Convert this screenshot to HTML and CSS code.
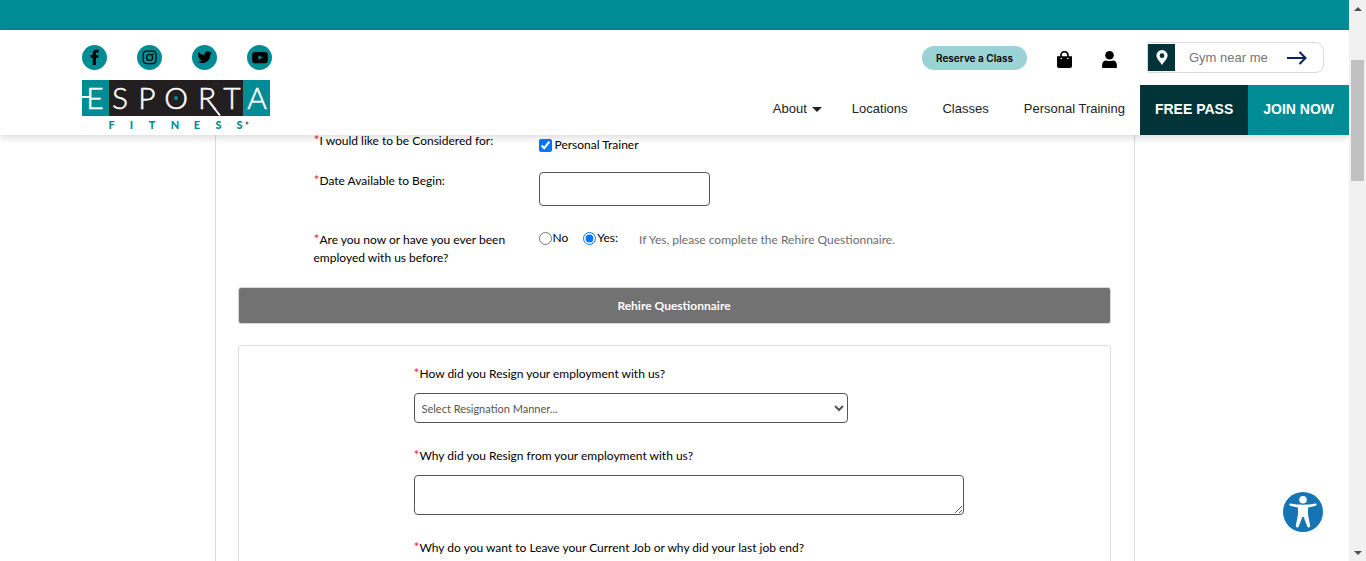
FILE: index.html
```html
<!DOCTYPE html>
<html lang="en">
<head>
<meta charset="utf-8">
<title>Esporta Fitness - Employment Application</title>
<link rel="stylesheet" href="styles.css">
</head>
<body>
<div class="viewport">
  <div class="page">
    <div class="top-strip"></div>
    <header class="site-header">
      <div class="brand">
        <div class="social">
          <a href="#" class="social-link" aria-label="Facebook"><svg width="25" height="25" viewBox="0 0 25 25"><path d="M10.800 20v-7.200H8.600V9.900h2.200V8.300c0-2.400 1.400-3.500 3.600-3.500 1 0 1.900.1 2.300.2v2.600h-1.400c-1.100 0-1.400.5-1.400 1.300v1h2.700l-.4 2.900h-2.300V20z"/></svg></a>
          <a href="#" class="social-link" aria-label="Instagram"><svg width="25" height="25" viewBox="0 0 25 25" fill="none" stroke="#000" stroke-width="1.200"><rect x="6.200" y="6.200" width="12.800" height="12.400" rx="3.500"/><circle cx="12.600" cy="12.400" r="3"/><circle cx="16.200" cy="8.900" r=".3"/></svg></a>
          <a href="#" class="social-link" aria-label="Twitter"><svg width="25" height="25" viewBox="0 0 25 25"><g transform="translate(5.500 5) scale(.6)"><path d="M23.950 4.570a10 10 0 0 1-2.820.78 4.960 4.960 0 0 0 2.160-2.720c-.95.550-2 .960-3.130 1.190a4.920 4.920 0 0 0-8.380 4.480C7.690 8.090 4.070 6.130 1.640 3.160a4.920 4.920 0 0 0 1.520 6.570 4.900 4.900 0 0 1-2.230-.61v.06c0 2.380 1.700 4.370 3.950 4.820a5 5 0 0 1-2.210.09 4.940 4.940 0 0 0 4.600 3.420A9.870 9.870 0 0 1 0 19.540a14 14 0 0 0 7.550 2.210c9.050 0 14-7.500 14-13.980 0-.21 0-.42-.02-.63a9.940 9.940 0 0 0 2.420-2.570z"/></g></svg></a>
          <a href="#" class="social-link" aria-label="YouTube"><svg width="25" height="25" viewBox="0 0 25 25"><rect x="5.200" y="7" width="15.600" height="11.200" rx="2.600"/><path d="M11.400 10.200v4.800l4.300-2.400z" fill="#008c95"/></svg></a>
        </div>
        <a href="#" class="logo" aria-label="Esporta Fitness">
          <svg width="188" height="50" viewBox="0 0 188 50">
            <rect width="188" height="36" fill="#008c95"/>
            <rect x="27" width="134" height="36" fill="#231f20"/>
            <g class="logo-name" text-anchor="middle">
              <text x="13" y="29">E</text><text x="38" y="29">S</text><text x="65" y="29">P</text><text x="94" y="29">O</text><text x="125" y="29">R</text><text x="150" y="29">T</text><text x="175" y="29">A</text>
            </g>
            <path d="M0 17h8M132 28l6 7.500" stroke="#fff" stroke-width="2" fill="none"/>
            <circle cx="94" cy="18" r="2" fill="#008c95"/>
            <g class="logo-sub" text-anchor="middle">
              <text x="29.500" y="49">F</text><text x="49.500" y="49">I</text><text x="70" y="49">T</text><text x="93" y="49">N</text><text x="115" y="49">E</text><text x="136.500" y="49">S</text><text x="157.500" y="49">S</text>
            </g>
            <circle cx="165" cy="43" r="1.500" fill="#777"/>
          </svg>
        </a>
      </div>
      <div class="header-side">
        <div class="tools">
          <button class="reserve" type="button">Reserve a Class</button>
          <a href="#" class="tool" aria-label="Shop"><svg width="15" height="17" viewBox="0 0 15 17"><path d="M4 6.500V4.200a3.500 3.500 0 0 1 7 0v2.300" fill="none" stroke="#000" stroke-width="1.700"/><path d="M0 5.300h15V15a2 2 0 0 1-2 2H2a2 2 0 0 1-2-2z"/><circle cx="4.200" cy="7.500" r=".8" fill="#fff"/><circle cx="10.800" cy="7.500" r=".8" fill="#fff"/></svg></a>
          <a href="#" class="tool" aria-label="Account"><svg width="15" height="17" viewBox="0 0 15 17"><circle cx="7.500" cy="4.300" r="4.300"/><path d="M0 15.500c0-4 1.500-5.900 4-5.900 1.200.6 5.800.6 7 0 2.500 0 4 1.900 4 5.900 0 1-.5 1.500-1.500 1.500h-12c-1 0-1.500-.5-1.500-1.500z"/></svg></a>
          <form class="search">
            <span class="pin"><svg width="12" height="15" viewBox="0 0 12 15"><path fill="#fff" fill-rule="evenodd" d="M6 0a5.600 5.600 0 0 1 5.600 5.600C11.600 9 7.500 12.500 6 15 4.500 12.500.4 9 .4 5.600A5.600 5.600 0 0 1 6 0zm0 3.300a2.400 2.400 0 1 0 0 4.800 2.400 2.400 0 0 0 0-4.800z"/></svg></span>
            <input class="search-input" type="text" placeholder="Gym near me" aria-label="Gym near me">
            <button class="search-go" type="button" aria-label="Search"><svg width="20" height="14" viewBox="0 0 20 14" fill="none" stroke="#0b1f66" stroke-width="2"><path d="M0 7h18.500M12.500 1l6 6-6 6"/></svg></button>
          </form>
        </div>
        <nav class="nav">
          <a href="#" class="nav-link">About<span class="caret"></span></a>
          <a href="#" class="nav-link">Locations</a>
          <a href="#" class="nav-link">Classes</a>
          <a href="#" class="nav-link">Personal Training</a>
          <a href="#" class="cta cta-dark">FREE PASS</a>
          <a href="#" class="cta">JOIN NOW</a>
        </nav>
      </div>
    </header>
    <main class="panel">
      <div class="row row-first">
        <span class="label"><span class="req">*</span>I would like to be Considered for:</span>
        <label class="check"><input type="checkbox" class="tick" checked> Personal Trainer</label>
      </div>
      <div class="row">
        <label class="label" for="start"><span class="req">*</span>Date Available to Begin:</label>
        <input class="date" id="start" type="text">
      </div>
      <div class="row row-last">
        <span class="label"><span class="req">*</span>Are you now or have you ever been employed with us before?</span>
        <div class="choices">
          <label class="choice"><input type="radio" class="tick" name="before">No</label>
          <label class="choice"><input type="radio" class="tick" name="before" checked>Yes:</label>
          <span class="hint">If Yes, please complete the Rehire Questionnaire.</span>
        </div>
      </div>
      <h2 class="bar">Rehire Questionnaire</h2>
      <section class="box">
        <div class="field">
          <label for="manner"><span class="req">*</span>How did you Resign your employment with us?</label>
          <select class="select" id="manner"><option>Select Resignation Manner...</option></select>
        </div>
        <div class="field">
          <label for="why"><span class="req">*</span>Why did you Resign from your employment with us?</label>
          <textarea class="area" id="why"></textarea>
        </div>
        <div class="field">
          <label for="leave"><span class="req">*</span>Why do you want to Leave your Current Job or why did your last job end?</label>
          <textarea class="area" id="leave"></textarea>
        </div>
      </section>
    </main>
    <button class="access" type="button" aria-label="Accessibility"><svg width="40" height="40" viewBox="0 0 40 40"><circle cx="20" cy="20" r="20" fill="#1474b4"/><circle cx="20" cy="7.800" r="3.800" fill="#fff"/><path fill="#fff" d="M7.500 11.500c4 .8 8 1.200 12.500 1.200s8.500-.4 12.500-1.200c1.300-.1 1.500 1.900.2 2.300-2.700.8-5.300 1.300-7.700 1.600v7.100l2.200 11.300c.2 1.700-2.200 2.400-2.900.7L20.700 25h-1.400l-3.600 9.500c-.7 1.700-3.100 1-2.900-.7L15 22.500v-7.100c-2.400-.3-5-.8-7.700-1.600-1.300-.4-1.100-2.400.2-2.300z"/></svg></button>
  </div>
  <div class="scrollbar" aria-hidden="true">
    <span class="arrow arrow-up"></span>
    <span class="thumb"></span>
    <span class="arrow arrow-down"></span>
  </div>
</div>
</body>
</html>
```
FILE: styles.css
```css
* { box-sizing: border-box; }
body { margin: 0; font: 12px/18px Lato, "Open Sans", sans-serif; color: #000; background: #fff; }
a { color: inherit; text-decoration: none; }
svg { display: block; }
button { border: 0; padding: 0; background: none; cursor: pointer; }
.viewport { display: grid; grid-template-columns: minmax(0, 1fr) 17px; height: 100vh; overflow: hidden; }
.page { overflow: hidden; }
.top-strip { height: 30px; background: #008c95; }

.site-header { position: relative; z-index: 1; display: flex; justify-content: space-between; background: #fff; box-shadow: 0 2px 8px rgba(0, 0, 0, .16); font-family: "Liberation Sans", Arial, sans-serif; }
.brand { padding: 15px 0 5px 82px; }
.social { display: flex; gap: 30px; margin-bottom: 10px; }
.social-link { border-radius: 50%; background: #008c95; }
.logo-name { font: 300 30px Lato, sans-serif; fill: #fff; stroke: #fff; stroke-width: .5; }
.logo-sub { font: 900 11px Lato, sans-serif; fill: #008c95; }
.header-side { display: flex; flex-direction: column; align-items: flex-end; }
.tools { display: flex; align-items: center; gap: 30px; height: 55px; padding-right: 25px; }
.tool { padding-top: 3px; }
.reserve { height: 24px; padding: 0 14px; border-radius: 12px; background: #9bd2d5; font: 600 10px/24px Inter, sans-serif; color: #000; }
.search { display: flex; width: 177px; height: 31px; padding: 1px 1px 1px 0; border: 1px solid #dadada; border-radius: 2px 8px 8px 2px; }
.pin { display: grid; place-items: center; flex: none; width: 27px; background: #003438; }
.search-input { flex: 1; min-width: 0; border: 0; padding: 0 0 0 14px; background: none; font: 13px "Liberation Sans", Arial, sans-serif; }
.search-input::placeholder { color: #757575; }
.search-go { margin-right: 15px; }
.nav { display: flex; height: 50px; font-size: 13px; line-height: 48px; color: #222; }
.nav-link { margin-right: 35px; white-space: nowrap; }
.nav-link:first-child { margin-right: 30px; }
.nav-link:nth-child(4) { margin-right: 15px; }
.caret { display: inline-block; margin-left: 5px; border: 5px solid transparent; border-top-color: #222; border-bottom: 0; vertical-align: middle; }
.cta { padding: 0 15px; background: #008c95; color: #fff; font-size: 14px; font-weight: 700; white-space: nowrap; }
.cta-dark { background: #003438; }

.panel { max-width: 920px; margin: -3px auto 0; padding: 0 23px 22px 22px; border: solid #dcdcdc; border-width: 0 1px; }
.req { color: #dc3545; font-size: 14px; line-height: 1; }
.row { display: grid; grid-template-columns: 200px 1fr; column-gap: 25px; align-items: start; margin-bottom: 25px; padding-left: 76px; }
.row-first { margin-bottom: 18px; }
.row-last { margin-bottom: 20px; }
.check { display: flex; align-items: center; gap: 3px; padding-top: 4px; }
.tick { width: 13px; height: 13px; margin: 0; accent-color: #0075ff; }
.date { width: 171px; height: 34px; border: 1px solid #555; border-radius: 4px; }
.choices { display: flex; align-items: flex-start; gap: 15px; }
.choice { display: flex; align-items: center; gap: 1px; line-height: 14px; }
.hint { margin-left: 6px; color: #6c6c6c; }
.bar { margin: 0 0 21px; border: 1px solid #d8d8d8; border-radius: 3px; background: #727272; color: #fff; font-size: 12px; line-height: 35px; text-align: center; }
.box { display: flex; flex-direction: column; gap: 24px; padding: 19px 146px 24px 175px; border: 1px solid #dcdcdc; border-radius: 4px; }
.field { display: grid; gap: 10px; justify-items: start; }
.select, .area { border: 1px solid #555; border-radius: 4px; background: #fff; color: #555; font: 11px Lato, sans-serif; }
.select { width: 434px; height: 30px; padding: 0 3px; }
.area { width: 100%; height: 40px; resize: both; }

.access { position: fixed; right: 43px; bottom: 29px; }

.scrollbar { display: grid; grid-template-rows: 17px 1fr 17px; justify-items: center; background: #f1f1f1; }
.arrow { align-self: center; border: 4px solid transparent; }
.arrow-up { border-bottom-color: #505050; border-top: 0; }
.arrow-down { border-top-color: #505050; border-bottom: 0; }
.thumb { width: 13px; height: 121px; margin-top: 43px; background: #c1c1c1; }
```
